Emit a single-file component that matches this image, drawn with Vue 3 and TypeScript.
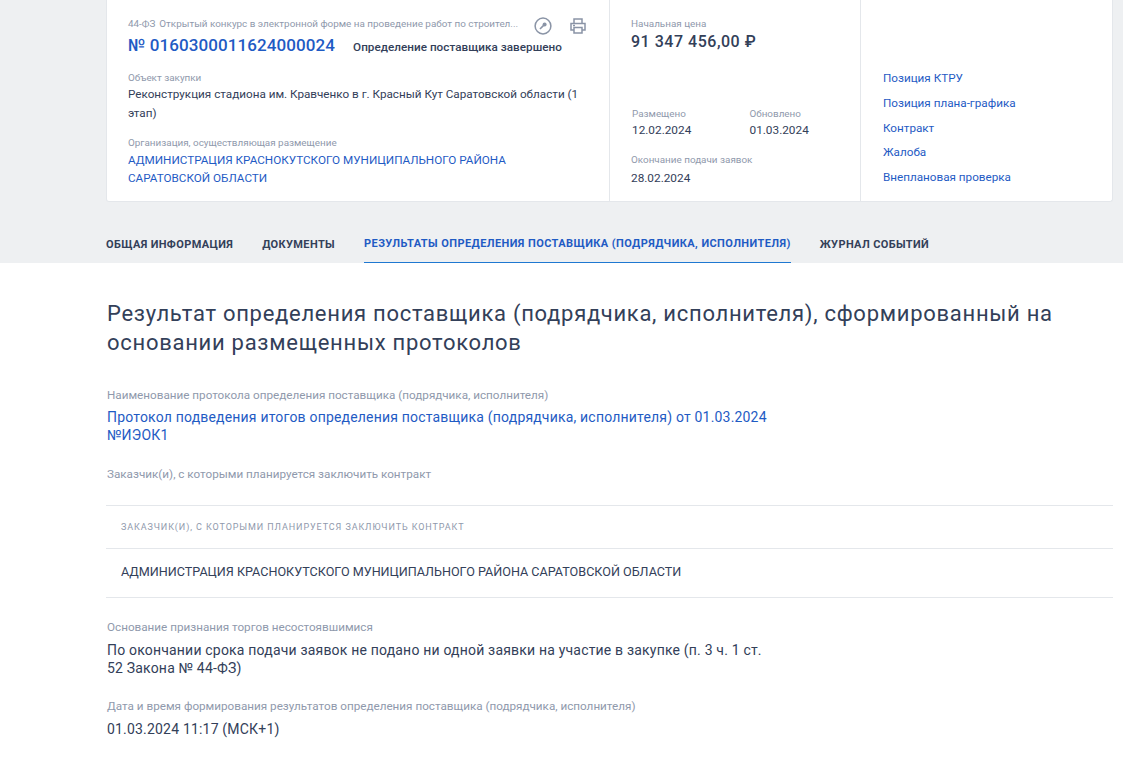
<script setup lang="ts">
const tabs: { label: string; active?: boolean }[] = [
  { label: 'ОБЩАЯ ИНФОРМАЦИЯ' },
  { label: 'ДОКУМЕНТЫ' },
  { label: 'РЕЗУЛЬТАТЫ ОПРЕДЕЛЕНИЯ ПОСТАВЩИКА (ПОДРЯДЧИКА, ИСПОЛНИТЕЛЯ)', active: true },
  { label: 'ЖУРНАЛ СОБЫТИЙ' },
]
const links: string[] = ['Позиция КТРУ', 'Позиция плана-графика', 'Контракт', 'Жалоба', 'Внеплановая проверка']
</script>

<template>
  <div class="page">
    <header class="band">
      <section class="card">
        <div class="col main">
          <div class="topline">
            <span class="law">44-ФЗ</span>
            <span class="kind">Открытый конкурс в электронной форме на проведение работ по строител...</span>
            <svg class="ico key" width="18" height="18" viewBox="0 0 18 18" fill="none">
              <circle cx="9" cy="9" r="7.9" stroke="#8a94a6" stroke-width="1.5" />
              <circle cx="10.6" cy="7.4" r="2" fill="#8a94a6" />
              <path d="M9.6 8.4 6 12" stroke="#8a94a6" stroke-width="1.6" />
            </svg>
            <svg class="ico print" width="16" height="16" viewBox="0 0 16 16" fill="none" stroke="#8a94a6" stroke-width="1.5">
              <path d="M4 5V1h8v4" />
              <path d="M4 12H1V5.5h14V12h-3" />
              <path d="M4 9.5h8V15H4z" />
              <path d="M3 7.5h2" />
            </svg>
          </div>
          <div class="numline">
            <a class="number">№ 0160300011624000024</a>
            <span class="status">Определение поставщика завершено</span>
          </div>
          <div class="label obj">Объект закупки</div>
          <div class="value object">Реконструкция стадиона им. Кравченко в г. Красный Кут Саратовской области (1 этап)</div>
          <div class="label org">Организация, осуществляющая размещение</div>
          <a class="value link">АДМИНИСТРАЦИЯ КРАСНОКУТСКОГО МУНИЦИПАЛЬНОГО РАЙОНА САРАТОВСКОЙ ОБЛАСТИ</a>
        </div>
        <div class="col mid">
          <div class="label">Начальная цена</div>
          <div class="price">91 347 456,00 ₽</div>
          <div class="dates">
            <div class="date">
              <div class="label">Размещено</div>
              <div class="value">12.02.2024</div>
            </div>
            <div class="date">
              <div class="label">Обновлено</div>
              <div class="value">01.03.2024</div>
            </div>
          </div>
          <div class="label end">Окончание подачи заявок</div>
          <div class="value deadline">28.02.2024</div>
        </div>
        <nav class="col side">
          <a v-for="l in links" :key="l" class="side-link">{{ l }}</a>
        </nav>
      </section>
      <nav class="tabs">
        <a v-for="t in tabs" :key="t.label" class="tab" :class="{ active: t.active }">{{ t.label }}</a>
      </nav>
    </header>
    <main class="content">
      <h1 class="title">Результат определения поставщика (подрядчика, исполнителя), сформированный на основании размещенных протоколов</h1>
      <div class="f-label first">Наименование протокола определения поставщика (подрядчика, исполнителя)</div>
      <a class="f-value f-link">Протокол подведения итогов определения поставщика (подрядчика, исполнителя) от 01.03.2024 №ИЭОК1</a>
      <div class="f-label customers">Заказчик(и), с которыми планируется заключить контракт</div>
      <table class="tbl">
        <thead>
          <tr><th>Заказчик(и), с которыми планируется заключить контракт</th></tr>
        </thead>
        <tbody>
          <tr><td>АДМИНИСТРАЦИЯ КРАСНОКУТСКОГО МУНИЦИПАЛЬНОГО РАЙОНА САРАТОВСКОЙ ОБЛАСТИ</td></tr>
        </tbody>
      </table>
      <div class="f-label reason">Основание признания торгов несостоявшимися</div>
      <div class="f-value">По окончании срока подачи заявок не подано ни одной заявки на участие в закупке (п. 3 ч. 1 ст. 52 Закона № 44-ФЗ)</div>
      <div class="f-label when">Дата и время формирования результатов определения поставщика (подрядчика, исполнителя)</div>
      <div class="f-value">01.03.2024 11:17 (МСК+1)</div>
    </main>
  </div>
</template>

<style>
html, body { margin: 0; background: #fff; }
</style>

<style scoped>
.page {
  width: 1123px;
  height: 758px;
  overflow: hidden;
  font-family: Roboto, "Liberation Sans", sans-serif;
  color: #334059;
}
.band {
  background: #eef0f2;
  height: 263px;
  padding-left: 106px;
  box-sizing: border-box;
}
.card {
  width: 1007px;
  height: 202px;
  box-sizing: border-box;
  background: #fff;
  border: 1px solid #e4e7eb;
  border-top: 0;
  border-radius: 0 0 3px 3px;
  display: grid;
  grid-template-columns: 503px 251px 1fr;
}
.col { box-sizing: border-box; min-width: 0; }
.main { padding: 16px 21px 0; border-right: 1px solid #e4e7eb; }
.mid { padding: 17px 21px 0; border-right: 1px solid #e4e7eb; }
.side {
  padding: 69px 0 0 22px;
  display: flex;
  flex-direction: column;
}
.topline { display: flex; align-items: center; height: 14px; font-size: 9.9px; color: #8f99ac; position: relative; }
.law { margin-right: 4px; flex: none; }
.kind { white-space: nowrap; }
.ico { position: absolute; }
.key { left: 406px; top: 1px; }
.print { left: 442px; top: 2px; }
.numline { display: flex; align-items: baseline; margin-top: 3px; height: 24px; }
.number { font-size: 17px; line-height: 24px; font-weight: 500; color: #1f5bc4; letter-spacing: 0.09px; }
.status { font-size: 11.7px; font-weight: 500; color: #334059; margin-left: 18px; letter-spacing: 0.03px; }
.label { font-size: 9.9px; line-height: 14px; color: #8f99ac; }
.obj { margin-top: 14px; }
.org { margin-top: 14px; margin-bottom: 0.5px; }
.value { font-size: 11.7px; line-height: 18px; color: #334059; display: block; }
.object { line-height: 18.5px; }
.link { color: #1f5bc4; }
.price { font-size: 16px; line-height: 22px; font-weight: 500; letter-spacing: 0.52px; color: #334059; }
.dates { display: flex; margin-top: 54px; padding-left: 1px; }
.date { flex: none; width: 117.5px; }
.date .value, .deadline { font-size: 11.8px; }
.end { margin-top: 14px; }
.deadline { margin-top: 2px; }
.side-link { font-size: 11.7px; line-height: 18px; color: #1f5bc4; margin-bottom: 6.8px; }
.tabs { display: flex; gap: 29px; height: 61px; align-items: stretch; padding-top: 0; }
.tab {
  font-size: 11px;
  font-weight: 700;
  letter-spacing: 0.37px;
  color: #334059;
  display: flex;
  align-items: center;
  height: 61px;
  padding-top: 23px;
  box-sizing: border-box;
}
.tab.active { color: #1f5bc4; border-bottom: 1px solid #1f78d1; padding-top: 22px; letter-spacing: 0.42px; }
.content { padding: 0 10px 0 107px; }
.title {
  margin: 36px 0 0;
  font-size: 22px;
  line-height: 29px;
  font-weight: 400;
  letter-spacing: 0.72px;
  color: #334059;
}
.f-label { font-size: 11.7px; line-height: 16px; color: #8f99ac; }
.f-value { font-size: 14px; line-height: 18px; letter-spacing: 0.19px; color: #334059; display: block; width: 670px; }
.f-link { color: #1f5bc4; }
.first { margin-top: 30px; margin-bottom: 4.5px; }
.customers { margin-top: 22.5px; }
.tbl { width: 1007px; margin: 23px 0 0 -1px; border-collapse: collapse; }
.tbl th, .tbl td { border-top: 1px solid #e4e7eb; border-bottom: 1px solid #e4e7eb; text-align: left; padding: 0 0 0 15px; }
.tbl th { height: 42px; font-size: 9px; font-weight: 400; letter-spacing: 0.91px; text-transform: uppercase; color: #8f99ac; }
.tbl td { height: 49px; box-sizing: border-box; padding-bottom: 3px; font-size: 12.6px; color: #334059; }
.reason { margin-top: 21px; margin-bottom: 5.5px; }
.when { margin-top: 21.5px; margin-bottom: 6px; }
</style>
